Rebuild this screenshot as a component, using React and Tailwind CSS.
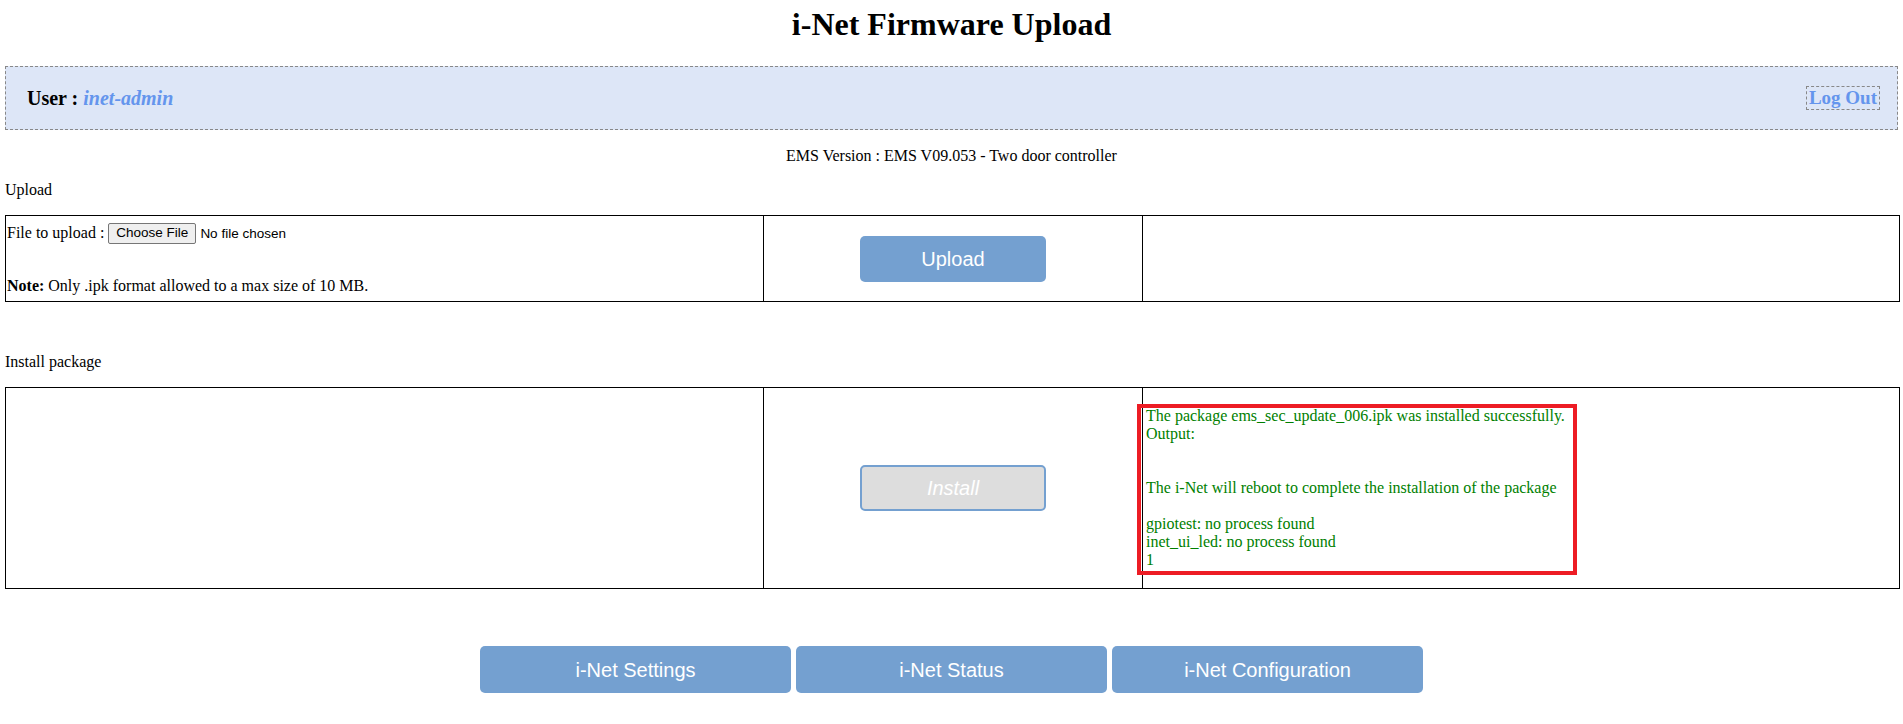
import { useState } from 'react'

const NAV_LINKS = ['i-Net Settings', 'i-Net Status', 'i-Net Configuration']

const INSTALL_OUTPUT = [
  'The package ems_sec_update_006.ipk was installed successfully.',
  'Output:',
  '',
  '',
  'The i-Net will reboot to complete the installation of the package',
  '',
  'gpiotest: no process found',
  'inet_ui_led: no process found',
  '1',
]

function BlueButton({ children, className = '', ...props }) {
  return (
    <button
      className={`bg-[#74a0d0] text-white text-[20px] font-['Liberation_Sans',Arial,sans-serif] rounded-[5px] ${className}`}
      {...props}
    >
      {children}
    </button>
  )
}

export default function App() {
  const [fileName, setFileName] = useState('')

  return (
    <div className="min-h-screen bg-white text-black px-[5px] text-[16px] leading-[18px] font-['Liberation_Serif','Times_New_Roman',serif]">
      <h1 className="text-center text-[32px] font-bold leading-[37px] pt-[6px]">i-Net Firmware Upload</h1>

      {/* user bar */}
      <div className="mt-[23px] h-[64px] border border-dashed border-[#888] bg-[#dde6f7] flex items-center justify-between pl-[21px] pr-[17px] font-bold">
        <div className="text-[20px]">
          User : <span className="italic text-[#6495ed]">inet-admin</span>
        </div>
        <a href="#" className="text-[19px] text-[#6495ed] border border-dashed border-[#888] leading-[22px] px-[2px]">Log Out</a>
      </div>

      <p className="mt-[17px] text-center">EMS Version : EMS V09.053 - Two door controller</p>

      <p className="mt-[16px]">Upload</p>
      <div className="mt-[16px] -mr-[2px] h-[87px] grid grid-cols-[757px_379px_1fr] border border-black">
        <div className="flex flex-col justify-center px-[1px]">
          <div className="h-[22px] flex items-center">
            <span className="mr-[4px]">File to upload :</span>
            <input
              type="file"
              accept=".ipk"
              onChange={e => setFileName(e.target.files?.[0]?.name || '')}
              title={fileName}
              className="text-[13.5px] font-['Liberation_Sans',Arial,sans-serif] file:h-[21px] file:mr-[4px] file:px-[7px] file:bg-[#efefef] file:border file:border-solid file:border-[#767676] file:rounded-[2px] file:text-black"
            />
          </div>
          <div className="mt-[33px]"><b>Note:</b> Only .ipk format allowed to a max size of 10 MB.</div>
        </div>
        <div className="border-l border-black flex items-center justify-center">
          <BlueButton className="w-[186px] h-[46px]">Upload</BlueButton>
        </div>
        <div className="border-l border-black" />
      </div>

      <p className="mt-[51px]">Install package</p>
      <div className="mt-[16px] -mr-[2px] h-[202px] grid grid-cols-[757px_379px_1fr] border border-black">
        <div />
        <div className="border-l border-black flex items-center justify-center">
          <button
            disabled
            className="w-[186px] h-[46px] bg-[#dddddd] border-2 border-[#74a0d0] rounded-[5px] text-white italic text-[20px] font-['Liberation_Sans',Arial,sans-serif]"
          >
            Install
          </button>
        </div>
        <div className="border-l border-black flex items-center pl-[3px]">
          <div className="relative inline-block text-[#008000]">
            {INSTALL_OUTPUT.map((line, i) => (
              <div key={i} className="h-[18px] whitespace-nowrap">{line}</div>
            ))}
            {/* highlight frame around the install log */}
            <div className="absolute -top-[3px] -bottom-[6px] -left-[9px] -right-[12px] border-4 border-[#ed1c24] pointer-events-none" />
          </div>
        </div>
      </div>

      <nav className="mt-[57px] flex justify-center gap-[5px]">
        {NAV_LINKS.map(label => (
          <BlueButton key={label} className="w-[311px] h-[47px]">{label}</BlueButton>
        ))}
      </nav>
    </div>
  )
}
